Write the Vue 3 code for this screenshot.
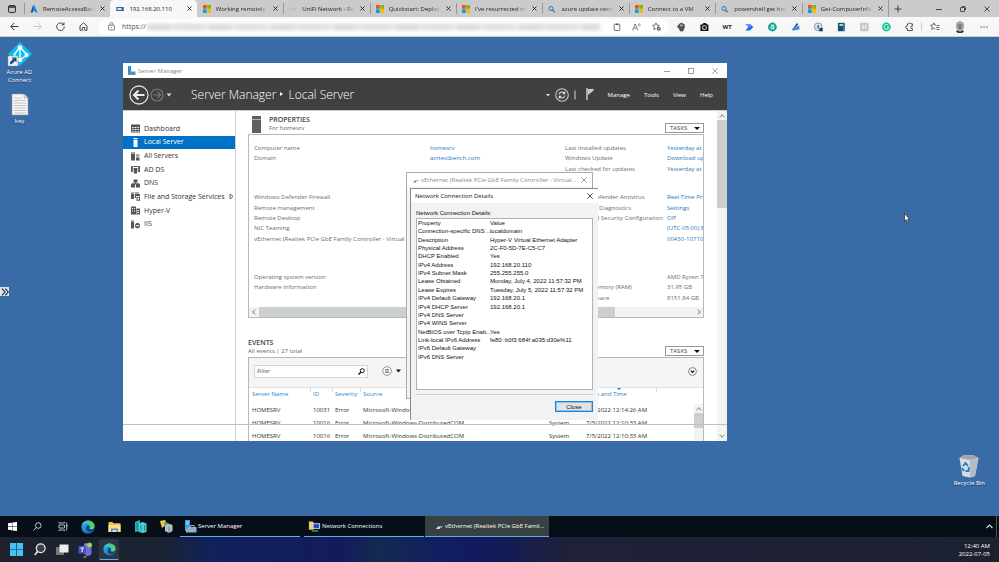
<script setup>
const tabs = [
  { icon: 'azure', title: 'RemoteAccessBastion' },
  { icon: 'bastion', title: '192.168.20.110', active: true },
  { icon: 'ms', title: 'Working remotely with' },
  { icon: 'dash', title: 'UniFi Network - Room' },
  { icon: 'ms', title: 'Quickstart: Deploy A' },
  { icon: 'ms', title: "I've resurrected my old" },
  { icon: 'search', title: 'azure update center' },
  { icon: 'ms', title: 'Connect to a VM - Az' },
  { icon: 'search', title: 'powershell get hostn' },
  { icon: 'ms', title: 'Get-ComputerInfo (M' }
]

const nav = [
  { icon: 'dashboard', label: 'Dashboard' },
  { icon: 'server', label: 'Local Server', active: true },
  { icon: 'servers', label: 'All Servers' },
  { icon: 'adds', label: 'AD DS' },
  { icon: 'dns', label: 'DNS' },
  { icon: 'files', label: 'File and Storage Services', more: true },
  { icon: 'hyperv', label: 'Hyper-V' },
  { icon: 'iis', label: 'IIS' }
]

const groups = [
  [
    ['Computer name', 'homesrv', 'Last installed updates', 'Yesterday at 1:12'],
    ['Domain', 'azrtestbench.com', 'Windows Update', 'Download updates'],
    ['', '', 'Last checked for updates', 'Yesterday at 1:12']
  ],
  [
    ['Windows Defender Firewall', '', 'Windows Defender Antivirus', 'Real-Time Protection'],
    ['Remote management', '', 'Feedback & Diagnostics', 'Settings'],
    ['Remote Desktop', '', 'IE Enhanced Security Configuration', 'Off'],
    ['NIC Teaming', '', '', '(UTC-05:00) Eastern'],
    ['vEthernet (Realtek PCIe GbE Family Controller - Virtual Switch)', '', '', '00430-10710-']
  ],
  [
    ['Operating system version', '', '', 'AMD Ryzen 7'],
    ['Hardware information', '', 'Installed memory (RAM)', '31.95 GB'],
    ['', '', 'Total disk space', '8151.84 GB']
  ]
]

const events = [
  ['HOMESRV', '10031', 'Error', 'Microsoft-Windows-DistributedCOM', 'System', '7/5/2022 12:14:26 AM'],
  ['HOMESRV', '10016', 'Error', 'Microsoft-Windows-DistributedCOM', 'System', '7/5/2022 12:10:33 AM'],
  ['HOMESRV', '10016', 'Error', 'Microsoft-Windows-DistributedCOM', 'System', '7/5/2022 12:10:33 AM']
]

const details = [
  ['Connection-specific DNS ...', 'localdomain'],
  ['Description', 'Hyper-V Virtual Ethernet Adapter'],
  ['Physical Address', '2C-F0-5D-7E-C5-C7'],
  ['DHCP Enabled', 'Yes'],
  ['IPv4 Address', '192.168.20.110'],
  ['IPv4 Subnet Mask', '255.255.255.0'],
  ['Lease Obtained', 'Monday, July 4, 2022 11:57:32 PM'],
  ['Lease Expires', 'Tuesday, July 5, 2022 11:57:32 PM'],
  ['IPv4 Default Gateway', '192.168.20.1'],
  ['IPv4 DHCP Server', '192.168.20.1'],
  ['IPv4 DNS Server', ''],
  ['IPv4 WINS Server', ''],
  ['NetBIOS over Tcpip Enab...', 'Yes'],
  ['Link-local IPv6 Address', 'fe80::b0f3:684f:a035:d30e%11'],
  ['IPv6 Default Gateway', ''],
  ['IPv6 DNS Server', '']
]
</script>

<template>
  <div class="page">
    <svg class="defs" width="0" height="0" aria-hidden="true">
      <defs>
        <linearGradient id="edgeBlue" x1="0" y1="0" x2="1" y2="1">
          <stop offset="0" stop-color="#2bb8e6" /><stop offset="1" stop-color="#0f5fb0" />
        </linearGradient>
        <linearGradient id="edgeGreen" x1="0" y1="0" x2="1" y2="0">
          <stop offset="0" stop-color="#2fb6e8" /><stop offset="1" stop-color="#5fd45a" />
        </linearGradient>
        <symbol id="edge" viewBox="0 0 16 16">
          <circle cx="8" cy="8" r="7.5" fill="url(#edgeBlue)" />
          <path d="M.6 7C1.200 3 4.400.5 8 .5c4.500 0 7.500 3 7.500 6.300 0 2.400-1.800 3.900-4 3.900-1.400 0-2.200-.5-2-1.100.5-.9.600-1.600.4-2.400C9.400 5.400 7.800 4.500 6 4.500 3.600 4.500 1.500 5.500.6 7z" fill="url(#edgeGreen)" />
          <path d="M9.700 6.900c.3 1-.1 1.800-.4 2.500-.3.800.9 1.500 2.700 1.400 1.300-.1 2.300-.6 2.900-1.200-.5 1.500-1.800 3.200-3.800 3.700-3 .6-5.200-1.600-5.200-3.900 0-1.500.8-2.700 1.900-3.200.8-.3 1.600 0 1.900.7z" fill="#0c3f7c" />
        </symbol>
        <symbol id="win" viewBox="0 0 12 12">
          <path d="M0 1.700L5.500.9v4.800H0zM6 .8L12 0v5.700H6zM0 6.300h5.500v4.800L0 10.300zM6 6.300h6V12l-6-.8z" fill="#fff" />
        </symbol>
      </defs>
    </svg>

    <div class="tabstrip">
      <button class="tabmenu" aria-label="Tab actions">
        <svg width="8" height="8" viewBox="0 0 8 8"><rect x=".6" y=".6" width="6.800" height="6.800" rx="1" fill="none" stroke="#222" /><path d="M.6 1.300h6.800v1.400H.6z" fill="#222" /></svg>
      </button>
      <div class="tabs" role="tablist">
        <div v-for="t in tabs" :key="t.title" class="tab" :class="{ active: t.active }" role="tab">
          <svg v-if="t.icon === 'azure'" class="fav" viewBox="0 0 16 16"><path d="M6 1h4L5.500 15H1z" fill="#0c59a4" /><path d="M9.500 1H6.500l4 14H15z" fill="#2e9fe6" /><path d="M5 9h7l1.500 5-6-3z" fill="#0078d4" /></svg>
          <svg v-else-if="t.icon === 'bastion'" class="fav" viewBox="0 0 16 16"><rect x=".5" y="4" width="15" height="8" fill="#2c62a6" /><rect x="3" y="6" width="8" height="4" fill="#dceafa" /></svg>
          <svg v-else-if="t.icon === 'ms'" class="fav" viewBox="0 0 16 16"><path d="M0 0h7.500v7.500H0z" fill="#f25022" /><path d="M8.500 0H16v7.500H8.500z" fill="#7fba00" /><path d="M0 8.500h7.500V16H0z" fill="#00a4ef" /><path d="M8.500 8.500H16V16H8.500z" fill="#ffb900" /></svg>
          <svg v-else-if="t.icon === 'search'" class="fav" viewBox="0 0 16 16"><circle cx="6" cy="7" r="4" fill="none" stroke="#2079c8" stroke-width="2" /><path d="M9 10l4.500 4.500" stroke="#2079c8" stroke-width="2.200" /></svg>
          <svg v-else class="fav" viewBox="0 0 16 16"><path d="M2 8h4M9 8h4" stroke="#a0a0a0" stroke-width="1.500" /></svg>
          <span class="tabtitle">{{ t.title }}</span>
          <button class="tabclose" aria-label="Close tab"><svg width="5" height="5" viewBox="0 0 5 5"><path d="M.5.5l4 4m0-4l-4 4" stroke="#222" stroke-width=".9" /></svg></button>
        </div>
      </div>
      <div class="winctl">
        <button aria-label="New tab"><svg width="8" height="8" viewBox="0 0 8 8"><path d="M4 .5v7M.5 4h7" stroke="#333" stroke-width=".9" /></svg></button>
        <span class="spacer"></span>
        <button aria-label="Minimize"><svg width="6" height="6" viewBox="0 0 6 6"><path d="M0 3.500h6" stroke="#222" stroke-width=".8" /></svg></button>
        <button aria-label="Restore"><svg width="6" height="6" viewBox="0 0 6 6"><rect x=".5" y="1.500" width="4" height="4" rx=".6" fill="none" stroke="#222" stroke-width=".8" /><path d="M2 .5h2.500a1 1 0 0 1 1 1V4" fill="none" stroke="#222" stroke-width=".8" /></svg></button>
        <button aria-label="Close"><svg width="6" height="6" viewBox="0 0 6 6"><path d="M.5.5l5 5m0-5l-5 5" stroke="#222" stroke-width=".8" /></svg></button>
      </div>
    </div>

    <div class="toolbar">
      <div class="navbtns">
        <button aria-label="Back"><svg width="9" height="9" viewBox="0 0 9 9"><path d="M8.500 4.500H1M4.200 1L.8 4.500 4.200 8" fill="none" stroke="#333" /></svg></button>
        <button aria-label="Forward"><svg width="9" height="9" viewBox="0 0 9 9"><path d="M.5 4.500H8M4.800 1l3.400 3.500L4.800 8" fill="none" stroke="#c8c8c8" /></svg></button>
        <button aria-label="Reload"><svg width="9" height="9" viewBox="0 0 9 9"><path d="M7.600 2.500A3.800 3.800 0 1 0 8.300 4.500M8 .5v2.300H5.700" fill="none" stroke="#333" stroke-width=".9" /></svg></button>
        <button aria-label="Home"><svg width="9" height="9" viewBox="0 0 9 9"><path d="M1 4l3.500-3.200L8 4v4.300H5.700V5.500H3.300v2.800H1z" fill="none" stroke="#333" stroke-width=".9" /></svg></button>
      </div>
      <div class="address">
        <svg width="7" height="9" viewBox="0 0 7 9"><rect x=".5" y="3.200" width="6" height="4.800" rx=".8" fill="none" stroke="#666" stroke-width=".8" /><path d="M2 3V2a1.500 1.500 0 0 1 3 0v1M3.500 5v1.200" fill="none" stroke="#666" stroke-width=".8" /></svg>
        <span class="url">https://</span>
        <span class="redacted"></span>
        <svg width="8" height="8" viewBox="0 0 8 8"><rect x="1.200" y="1.200" width="5.600" height="6.300" rx=".6" fill="none" stroke="#555" stroke-width=".8" /><path d="M2.800.6h2.400v1.500H2.800z" fill="#555" /></svg>
        <svg width="9" height="8" viewBox="0 0 9 8"><path d="M.5 7.500l2.700-6.500 2.700 6.500M1.400 5.200H5" fill="none" stroke="#666" stroke-width=".8" /><path d="M6 1c.6.500.6 1.300 0 2M7.300.3c1 1 1 2.300 0 3.300" fill="none" stroke="#666" stroke-width=".7" /></svg>
        <svg width="9" height="9" viewBox="0 0 9 9"><path d="M4 .8l1 2.300 2.500.3-1.800 1.700.2 1.200M4 6.500L1.900 7.600l.4-2.500L.5 3.400 3 3.100 4 .8" fill="none" stroke="#555" stroke-width=".8" /><circle cx="6.700" cy="6.800" r="2" fill="#555" /><path d="M6.700 5.800v2M5.700 6.800h2" stroke="#fff" stroke-width=".5" /></svg>
      </div>
      <div class="exts">
        <svg viewBox="0 0 10 10"><path d="M1.500 3.500L2.800 4V2l1 .2.3-.9 1.100.3.900-.3.600 1 1.200.2V6L7 7.500 6.500 9H4L3 6.800 1.200 5z" fill="#555" stroke="#222" stroke-width=".6" /><path d="M4 2.500v1.800M5.200 2.300v2M6.500 2.800v1.500" stroke="#f0f0f0" stroke-width=".6" /></svg>
        <svg viewBox="0 0 10 10"><path d="M1 2.500h2L4 1h2.500l1 1.500H9V9H1z" fill="#111" /><circle cx="5" cy="5.600" r="2" fill="none" stroke="#fff" stroke-width=".9" /></svg>
        <b class="wt">WT</b>
        <svg viewBox="0 0 10 10"><path d="M1 2h4.500L9 5 5.500 8.500H1L4 5z" fill="#2769e6" /><path d="M1 2h3.500l3 2.500H4z" fill="#5aa0ff" /></svg>
        <svg viewBox="0 0 10 10"><circle cx="5" cy="5" r="4.400" fill="#12a594" /><circle cx="4.800" cy="5.500" r="1.400" fill="none" stroke="#fff" /><path d="M3.500 3h2.800v4.300" fill="none" stroke="#fff" stroke-width=".8" /></svg>
        <svg viewBox="0 0 10 10"><path d="M1 8.500L6.500 1 8 2.200 4 6.500z" fill="#2b4d8c" /><path d="M2 8.800L4 4.500 9 4v3.500z" fill="#3f8be8" /></svg>
        <svg viewBox="0 0 10 10"><circle cx="4.800" cy="4.800" r="3.900" fill="#d5e6f7" stroke="#6d9ac4" /><path d="M4.800 3v3.500" stroke="#245" stroke-width="1.200" /><rect x="6" y="6" width="3.300" height="3.300" fill="#333" /></svg>
        <svg viewBox="0 0 10 10"><rect x="1.500" y=".8" width="7" height="8.400" fill="#1e4c6b" /><rect x="3" y="2" width="3.500" height="2" fill="#a4d8ef" /><path d="M7.500 1v8" stroke="#4fa6cc" /></svg>
        <svg viewBox="0 0 10 10"><rect x=".8" y=".8" width="8.400" height="8.400" rx=".8" fill="#c4c4c4" /><path d="M3.500 2.500v5M6.500 2.500v5M3.500 5h3" stroke="#f5f5f5" /></svg>
        <svg viewBox="0 0 10 10"><circle cx="5" cy="5" r="4.400" fill="#15c39a" /><path d="M7 3.500A2.400 2.400 0 1 0 7.400 5.400H5.500" fill="none" stroke="#fff" stroke-width=".9" /></svg>
        <svg viewBox="0 0 10 10"><path d="M3 1.800h1.200a1.200 1.200 0 0 1 2.300 0H8v2.400a1.200 1.200 0 1 0 0 2.200V8.500H3V6.500a1.300 1.300 0 1 1 0-2.500z" fill="none" stroke="#444" stroke-width=".9" /></svg>
      </div>
      <div class="tools">
        <svg width="10" height="10" viewBox="0 0 10 10"><path d="M6 3.200L4.800 3 3.800.9 2.800 3 .6 3.300l1.600 1.600-.4 2.400 2-1.100 1.400.8M6.500 3.500h3M6 5.500h3.500M6.500 7.500h3" fill="none" stroke="#444" stroke-width=".8" /></svg>
        <svg width="10" height="12" viewBox="0 0 10 12"><ellipse cx="5" cy="5" rx="4.200" ry="4.800" fill="#a8a8a8" /><path d="M3 4h1.300M5.700 4H7M3.500 7h3M5 4.500v1.500" stroke="#333" stroke-width=".9" /><path d="M1 10.500Q2.500 8.500 4 10l1 .5L6 10q1.500-1.500 3 .5L7 12H3z" fill="#3a3a3a" /></svg>
        <svg width="8" height="4" viewBox="0 0 8 4"><path d="M.5 2h1.300M3.400 2h1.300M6.300 2h1.300" stroke="#333" stroke-width="1.200" /></svg>
      </div>
    </div>

    <main class="desktop">
      <div class="shortcuts">
        <a href="#" class="shortcut">
          <svg width="26" height="26" viewBox="0 0 26 26"><path d="M13 1l12 12-12 12L1 13z" fill="#10bdf2" /><path d="M13 6v13M13 6l-6 8 6 5 7-5z" fill="none" stroke="#fff" stroke-width="1.300" /><circle cx="13" cy="6.500" r="2.300" fill="#fff" /><circle cx="19.500" cy="14" r="2" fill="#fff" /><circle cx="13" cy="19" r="2.200" fill="#fff" /><rect x="1" y="15" width="10" height="10" fill="#f5f5f5" stroke="#889" stroke-width=".5" /><path d="M3 23.500V21l3-3-1.700-1.500H9.500v5L8 20l-2.500 2.500z" fill="#1c4d94" /></svg>
          <span>Azure AD<br>Connect</span>
        </a>
        <a href="#" class="shortcut">
          <svg width="18" height="23" viewBox="0 0 18 23"><path d="M1 1h12l4 4v17H1z" fill="#f6f6f6" stroke="#999" stroke-width=".6" /><path d="M13 1v4h4" fill="#ddd" stroke="#999" stroke-width=".5" /><path d="M3 5h8M3 7.500h12M3 10h12M3 12.500h12M3 15h12M3 17.500h12M3 20h12" stroke="#b5b9bd" stroke-width=".8" /></svg>
          <span>key</span>
        </a>
      </div>
      <button class="flyout" aria-label="Expand clipboard panel"><svg width="8" height="8" viewBox="0 0 8 8"><path d="M1 .7L4 4 1 7.300M4.300.7l3 3.300-3 3.300" fill="none" stroke="#222" stroke-width="1.100" /></svg></button>
      <a href="#" class="shortcut bin">
        <svg width="22" height="24" viewBox="0 0 22 24"><path d="M1.500 4L6 1l10 .5L20.500 4 17 22 12 23.500 4.500 22z" fill="#d7dce0" /><path d="M1.500 4l10 2 9-2-4.500-2.500L6 1z" fill="#9ca6ac" /><path d="M12 6l8.500-2L17 22l-5 1.500z" fill="#b4bcc2" /><path d="M5 12l2.500-3L10 12M11 13l-.5 4H7.500M6 17l-2-3" fill="none" stroke="#1b7fd3" stroke-width="1.900" /></svg>
        <span>Recycle Bin</span>
      </a>
      <svg class="cursor" width="6" height="10" viewBox="0 0 6 10"><path d="M.5.6v7.600l1.700-1.500 1.100 2.700 1.200-.5-1.100-2.600h2.200z" fill="#fff" stroke="#111" stroke-width=".6" /></svg>

      <section class="window manager">
        <header class="caption">
          <svg width="9" height="9" viewBox="0 0 9 9"><path d="M1 0h3v7H1z" fill="#2e8bd0" /><path d="M3 5.500h5.500V9H1V7z" fill="#5f8fb5" /><path d="M2 1.200h1" stroke="#fff" stroke-width=".6" /></svg>
          <span>Server Manager</span>
          <button aria-label="Minimize"><svg width="6" height="6" viewBox="0 0 6 6"><path d="M0 3.500h6" stroke="#888" stroke-width=".8" /></svg></button>
          <button aria-label="Maximize"><svg width="6" height="6" viewBox="0 0 6 6"><rect x=".5" y=".5" width="5" height="5" fill="none" stroke="#888" stroke-width=".8" /></svg></button>
          <button aria-label="Close"><svg width="6" height="6" viewBox="0 0 6 6"><path d="M.3.3l5.400 5.400m0-5.400L.3 5.700" stroke="#888" stroke-width=".8" /></svg></button>
        </header>
        <div class="banner">
          <svg width="46" height="20" viewBox="0 0 46 20"><circle cx="11" cy="10" r="9" fill="none" stroke="#ddd" stroke-width="1.300" /><path d="M16.500 10H6.500M10.500 5.500L6 10l4.500 4.500" fill="none" stroke="#eee" stroke-width="2" /><circle cx="29" cy="10" r="6" fill="none" stroke="#777" stroke-width="1.200" /><path d="M25.500 10h6.500M29.500 7l3 3-3 3" fill="none" stroke="#777" stroke-width="1.200" /><path d="M38.500 8.500h5l-2.500 3z" fill="#ddd" /></svg>
          <h1>Server Manager <i></i> Local Server</h1>
          <svg width="48" height="18" viewBox="0 0 48 18"><path d="M0 8h4L2 10.500z" fill="#ddd" /><circle cx="16" cy="9" r="6.300" fill="none" stroke="#c8c8c8" stroke-width="1.100" /><path d="M13 8.500a3 3 0 0 1 5.300-1.300M18.800 5.500v2.300h-2.300M19 9.500a3 3 0 0 1-5.300 1.300M13.200 12.500v-2.300h2.300" fill="none" stroke="#ddd" stroke-width="1.100" /><path d="M29 4.500v9" stroke="#ccc" stroke-width="1.100" /><path d="M41 2v12" stroke="#ccc" stroke-width="1.500" /><path d="M42 3h6l-1 2-5 4z" fill="#ccc" /></svg>
          <nav class="menus"><button>Manage</button><button>Tools</button><button>View</button><button>Help</button></nav>
        </div>
        <div class="content">
          <nav class="side">
            <a v-for="n in nav" :key="n.label" href="#" :class="{ on: n.active }">
              <svg width="9" height="9" viewBox="0 0 9 9" fill="currentColor">
                <path v-if="n.icon === 'dashboard'" d="M0 .5h9v8H0zM1 3v1h1.500V3zm2.500 0v1h2V3zm3 0v1H8V3zM1 5v1h1.500V5zm2.500 0v1h2V5zm3 0v1H8V5zM1 7v.8h1.500V7zm2.500 0v.8h2V7zm3 0v.8H8V7z" fill-rule="evenodd" />
                <path v-else-if="n.icon === 'server'" d="M2.500 0h4v1.300h-4zM2.500 2h4v7h-4z" />
                <path v-else-if="n.icon === 'servers'" d="M0 .5h4v1H0zM0 2h4v6.500H0zM5 2.500h3.500v1H5zM5 4.500h3.500v1H5zM5 6h3.500v2.500H5z" />
                <path v-else-if="n.icon === 'adds'" d="M0 1h1.800v6H0zM2.500 1h4v1h-4zM2.500 3h4L6 8.500H3zM7.200 1H9v6H7.200z" />
                <path v-else-if="n.icon === 'dns'" d="M2.500.5h4v3h-4zM0 4.800h4v3.700H0zM5 4.800h4v3.700H5zM4 3.500h1v2H4zM1 4h7v.5H1z" />
                <path v-else-if="n.icon === 'files'" d="M0 .5h3v1H0zM0 2h3v5H0zM3.800.5H8v1H3.800zM3.800 2H9v2H5v2H3.800zM5.500 4.700H9v4H5.500zM6.500 5.700v2H8v-2z" fill-rule="evenodd" />
                <path v-else-if="n.icon === 'hyperv'" d="M0 .5h5v8H0zM1 2v1h1V2zm2 0v1h1V2zM1 4.500v1h1v-1zm2 0v1h1v-1zM5.500 2.500H9v6H5.500zM6.300 4v1h1.700V4zm0 2v1h1.700V6z" fill-rule="evenodd" />
                <path v-else d="M0 .5h3v1H0zM0 2h3v6.500H0zM6.500 3a2.700 2.700 0 1 1-.1 0zM4.700 5.200v1h3.500v-1z" fill-rule="evenodd" />
              </svg>
              <span>{{ n.label }}</span>
              <svg v-if="n.more" class="more" width="5" height="7" viewBox="0 0 5 7"><path d="M1 1l3 2.500L1 6z" fill="none" stroke="#444" stroke-width=".8" /></svg>
            </a>
          </nav>

          <div class="main">
            <div class="head">
              <svg width="9" height="17" viewBox="0 0 9 17"><path d="M0 0h9v17H0z" fill="#606060" /><path d="M0 3.500h9" stroke="#ccc" stroke-width=".8" /></svg>
              <div class="headtext"><h2>PROPERTIES</h2><p>For homesrv</p></div>
              <button class="tasks">TASKS<i></i></button>
            </div>
            <div class="panel">
              <div v-for="(g, gi) in groups" :key="gi" class="group">
                <div v-for="(r, ri) in g" :key="ri" class="prow">
                  <span>{{ r[0] }}</span><a href="#">{{ r[1] }}</a><span>{{ r[2] }}</span>
                  <a v-if="gi < 2" href="#">{{ r[3] }}</a><span v-else>{{ r[3] }}</span>
                </div>
              </div>
              <div class="hscroll"><i class="chev left"></i><b></b><i class="chev right"></i></div>
            </div>
            <div class="head second">
              <div class="headtext"><h2>EVENTS</h2><p>All events | 27 total</p></div>
              <button class="tasks">TASKS<i></i></button>
            </div>
            <div class="panel events">
              <div class="filterbar">
                <div class="filter">
                  <input type="text" placeholder="Filter" aria-label="Filter">
                  <svg width="7" height="7" viewBox="0 0 7 7"><circle cx="4.300" cy="2.700" r="2" fill="none" stroke="#111" /><path d="M2.800 4.200L.5 6.500" stroke="#111" stroke-width="1.300" /></svg>
                </div>
                <svg width="20" height="10" viewBox="0 0 20 10"><circle cx="5" cy="5" r="4.300" fill="#fff" stroke="#777" stroke-width=".8" /><path d="M3 3.500h4M3 5h4M3 6.500h4" stroke="#666" stroke-width=".8" /><path d="M14 3.500h5L16.500 6.500z" fill="#111" /></svg>
                <span class="spacer"></span>
                <svg width="9" height="9" viewBox="0 0 9 9"><circle cx="4.500" cy="4.500" r="3.900" fill="#fff" stroke="#666" stroke-width=".8" /><path d="M2.800 3.700l1.700 1.700 1.700-1.700" fill="none" stroke="#111" stroke-width="1.200" /></svg>
              </div>
              <table class="log">
                <colgroup><col class="c1"><col class="c2"><col class="c3"><col class="c4"><col class="c5"><col class="c6"><col></colgroup>
                <thead><tr><th>Server Name</th><th>ID</th><th>Severity</th><th>Source</th><th>Log</th><th class="sorted">Date and Time</th><th></th></tr></thead>
                <tbody><tr v-for="(e, i) in events" :key="i"><td v-for="(c, j) in e" :key="j">{{ c }}</td><td></td></tr></tbody>
              </table>
              <div class="vscroll inner"><i class="chev up"></i><b></b></div>
            </div>
          </div>
          <div class="vscroll outer"><i class="chev up"></i><b></b><i class="chev down"></i></div>
        </div>
        <div class="seam"></div>
      </section>

      <section class="window status">
        <header class="dcaption">
          <svg width="6" height="5" viewBox="0 0 6 5"><path d="M0 4.500l1.500-2H4l-1.500 2z" fill="#6b8ba8" /><path d="M3 2h3L4.500 3.500z" fill="#8fb4cf" /></svg>
          <span>vEthernet (Realtek PCIe GbE Family Controller - Virtual...</span>
          <button aria-label="Close"><svg width="6" height="6" viewBox="0 0 6 6"><path d="M.3.3l5.400 5.400m0-5.400L.3 5.700" stroke="#888" stroke-width=".8" /></svg></button>
        </header>
      </section>

      <section class="window details">
        <header class="dcaption">
          <span>Network Connection Details</span>
          <button aria-label="Close"><svg width="6" height="6" viewBox="0 0 6 6"><path d="M.3.3l5.400 5.400m0-5.400L.3 5.700" stroke="#222" stroke-width=".8" /></svg></button>
        </header>
        <div class="dbody">
          <p id="dlabel">Network Connection Details:</p>
          <div class="listbox">
            <table aria-labelledby="dlabel">
              <thead><tr><th>Property</th><th>Value</th></tr></thead>
              <tbody><tr v-for="d in details" :key="d[0]"><td>{{ d[0] }}</td><td>{{ d[1] }}</td></tr></tbody>
            </table>
          </div>
          <hr>
          <button class="closebtn">Close</button>
        </div>
      </section>
    </main>

    <footer class="remotebar">
      <div class="pins">
        <button aria-label="Start"><svg width="9" height="9"><use href="#win" /></svg></button>
        <button aria-label="Search"><svg width="9" height="9" viewBox="0 0 9 9"><circle cx="5.300" cy="3.500" r="2.800" fill="none" stroke="#ddd" stroke-width=".9" /><path d="M3.300 5.500L.5 8.500" stroke="#ddd" stroke-width=".9" /></svg></button>
        <button aria-label="Task view"><svg width="10" height="9" viewBox="0 0 10 9"><path d="M1 0v1h5.500V0M1 3h5.500v3H1zM1 9V8h5.500v1M8.700.5v8" fill="none" stroke="#ccc" stroke-width=".9" /><path d="M8 3h1.500v1.500H8z" fill="#ccc" /></svg></button>
        <button aria-label="Edge"><svg width="14" height="14"><use href="#edge" /></svg></button>
        <button aria-label="File Explorer"><svg width="13" height="12" viewBox="0 0 13 12"><path d="M.5 1h4l1 1.300h7V11H.5z" fill="#f2c14e" /><path d="M.5 4h12v7H.5z" fill="#ffe08a" /><path d="M3 7.500h7V11H8.500V9h-4v2H3z" fill="#3f94dc" /></svg></button>
        <button aria-label="Server tools"><svg width="13" height="13" viewBox="0 0 13 13"><path d="M1 2l5-2v11l-5 1z" fill="#2ab1bd" /><path d="M5 3.500l3.500-1.500 4 1.500V12L9 13l-4-1z" fill="#49d0d8" /><path d="M3 3v7M7 5v6M10.500 5v6" stroke="#14747e" stroke-width=".8" /></svg></button>
        <button aria-label="Directory"><svg width="13" height="13" viewBox="0 0 13 13"><path d="M0 1l5-1 2 4-5 4z" fill="#f0c75a" /><path d="M4 2l4 1v5H5z" fill="#4e9b57" /><path d="M5 5.500l3-2 4.500 1.500V11L9 13l-4-2z" fill="#b9bec2" /><path d="M9 6.500v6" stroke="#777" stroke-width=".8" /></svg></button>
      </div>
      <div class="running">
        <button class="task"><svg width="13" height="13" viewBox="0 0 13 13"><path d="M1 0h5v11H1z" fill="#3b9fe3" /><path d="M2 2h3M2 4h3" stroke="#dff" stroke-width=".7" /><path d="M4 7h8.500v5.500H2V10z" fill="#8fb0c8" /><path d="M6.500 7V5.500H10V7" fill="none" stroke="#8fb0c8" /></svg><span>Server Manager</span></button>
        <button class="task net"><svg width="13" height="13" viewBox="0 0 14 13"><path d="M1 1h4l1 1v8H1z" fill="#f0d068" /><path d="M5 3h8v6H5z" fill="#d3dde8" /><path d="M6 4h6v4H6z" fill="#1e3fd0" /><path d="M4 10.500h7v1.500H4z" fill="#39a568" /></svg><span>Network Connections</span></button>
        <button class="task current"><svg width="7" height="6" viewBox="0 0 7 6"><path d="M0 6l2-2.500h3L3.500 6z" fill="#d8e2e8" /><path d="M3.500 3h3L5.500 5z" fill="#8ab3c9" /></svg><span>vEthernet (Realtek PCIe GbE Famil...</span></button>
      </div>
      <span class="spacer"></span>
      <button class="tray" aria-label="Show hidden icons"><svg width="7" height="5" viewBox="0 0 7 5"><path d="M.5 4l3-3 3 3" fill="none" stroke="#ddd" stroke-width="1.100" /></svg></button>
    </footer>

    <footer class="hostbar">
      <div class="pins">
        <button aria-label="Start"><svg width="13" height="13" viewBox="0 0 13 13"><path d="M0 0h6.200v6.200H0zM6.800 0H13v6.200H6.800zM0 6.800h6.200V13H0zM6.800 6.800H13V13H6.800z" fill="#45c1f5" /></svg></button>
        <button aria-label="Search"><svg width="12" height="13" viewBox="0 0 12 13"><circle cx="6.700" cy="5.300" r="4.400" fill="#3b414b" stroke="#eee" stroke-width="1.200" /><path d="M3.500 8.500L.8 12" stroke="#eee" stroke-width="1.500" /></svg></button>
        <button aria-label="Task view"><svg width="13" height="12" viewBox="0 0 13 12"><path d="M0 3h8v8H0z" fill="#777" /><path d="M3.500.5h9v8h-9z" fill="#ececec" /></svg></button>
        <button aria-label="Teams"><svg width="15" height="16" viewBox="0 0 15 16"><circle cx="8" cy="3" r="2" fill="#7b83eb" /><path d="M5 5h8.500v4.500a3.500 3.500 0 0 1-7 1.500z" fill="#6a70d8" /><rect x=".5" y="4" width="7.500" height="7.500" rx=".8" fill="#4b53bc" /><path d="M2.500 6h3.500M4.200 6v4" stroke="#fff" /><circle cx="11.500" cy="3" r="2.600" fill="#92c353" /><path d="M10.200 3l1 1 1.600-1.800" fill="none" stroke="#fff" stroke-width=".6" /><path d="M5.500 15h3" stroke="#aaa" stroke-width="1.200" /></svg></button>
        <button class="hot" aria-label="Edge"><svg width="13" height="13"><use href="#edge" /></svg></button>
      </div>
      <div class="clock"><span>12:40 AM</span><span>2022-07-05</span></div>
    </footer>
  </div>
</template>

<style>
body { margin: 0; background: #396ca6; }
</style>

<style scoped>
* { box-sizing: border-box; }
.page { display: flex; flex-direction: column; height: 100vh; overflow: hidden; font: 6px/8px "Open Sans", "Noto Sans", sans-serif; color: #222; }
.defs { position: absolute; }
svg { flex: none; display: block; }
button { display: flex; align-items: center; justify-content: center; padding: 0; border: 0; background: none; font: inherit; color: inherit; }
a { color: inherit; text-decoration: none; }
h1, h2, p { margin: 0; font: inherit; }
.spacer { flex: 1; }

.tabstrip { display: flex; flex: none; height: 17px; background: #cbcbcb; }
.tabmenu { width: 24px; }
.tabs { display: flex; flex: 1; min-width: 0; }
.tab { display: flex; flex: 1; min-width: 0; align-items: center; gap: 5px; padding: 0 5px 0 6px; position: relative; }
.tab::before { content: ""; position: absolute; left: 0; top: 3px; bottom: 3px; width: 1px; background: #999; }
.tab.active { background: #f7f7f7; border-radius: 4px 4px 0 0; }
.tab.active::before, .tab.active + .tab::before { display: none; }
.fav { width: 8px; height: 8px; }
.tabtitle { flex: 1; min-width: 0; overflow: hidden; white-space: nowrap; mask-image: linear-gradient(90deg, #000 80%, transparent); }
.tab.active .tabtitle { mask-image: none; }
.winctl { display: flex; align-items: center; width: 111px; padding-right: 9px; border-left: 1px solid #999; }
.winctl button { width: 18px; }
.winctl button:nth-last-child(-n + 3) { width: 6px; margin-left: 18px; }
.winctl button:nth-last-child(3) { margin-left: 0; }

.toolbar { display: flex; flex: none; align-items: center; height: 20px; background: #f7f7f7; border-bottom: 1px solid #c9ccd0; }
.navbtns { display: flex; width: 98px; padding-left: 3px; }
.navbtns button { width: 23px; }
.address { display: flex; flex: 1; align-items: center; height: 16px; padding: 0 7px 0 10px; gap: 11px; background: #fff; border-radius: 8px; }
.address .url { margin-left: -4px; color: #555; font-size: 7px; }
.redacted { flex: 1; height: 6px; margin: 0 2px 0 -10px; opacity: .8; filter: blur(2px); background: repeating-linear-gradient(90deg, #ccc 0 23px, #dedede 23px 27px, #d2d2d2 27px 58px, #e2e2e2 58px 62px); }
.exts { display: flex; align-items: center; width: 254px; padding-left: 2px; border-right: 1px solid #ccc; height: 9px; }
.exts > * { flex: 1; height: 10px; }
.exts .wt { text-align: center; line-height: 10px; }
.tools { display: flex; align-items: center; justify-content: space-between; width: 77px; padding: 0 11px 0 8px; }

.desktop { position: relative; flex: 1; min-height: 0; background: #396ca6; }
.shortcuts { display: flex; flex-direction: column; gap: 9px; width: 39px; padding-top: 4px; }
.shortcut { display: flex; flex-direction: column; align-items: center; color: #fff; text-align: center; text-shadow: 0 1px 1px #1b3a60; white-space: nowrap; }
.shortcut svg { margin-bottom: 1px; }
.flyout { position: absolute; left: 0; top: 250px; width: 9px; height: 9px; background: #dbe4ee; }
.bin { position: absolute; right: 14px; top: 417px; }
.cursor { position: absolute; left: 904px; top: 176px; }
.window { position: absolute; overflow: hidden; }

.manager { display: flex; flex-direction: column; left: 123px; top: 26px; width: 604px; height: 378px; background: #fff; }
.caption { display: flex; flex: none; align-items: center; height: 15px; padding: 0 9px 0 4px; color: #888; }
.caption span { flex: 1; margin-left: 2px; }
.caption button { margin-left: 18px; }
.banner { display: flex; flex: none; align-items: center; height: 32px; padding: 1px 14px 0 5px; background: #404040; color: #fff; }
.banner h1 { flex: 1; margin-left: 17px; font-size: 12px; line-height: 16px; font-weight: 300; white-space: nowrap; }
.banner h1 i { display: inline-block; margin: 0 2px 0 1px; border: 2px solid transparent; border-left: 3px solid #fff; border-right: 0; vertical-align: 3px; }
.menus { display: flex; gap: 14px; margin-left: 14px; }
.content { display: flex; flex: 1; min-height: 0; border-top: 1px solid #ccc; }
.side { display: grid; grid-auto-rows: 1fr; width: 112px; height: 109px; margin-top: 11px; font-size: 7px; color: #333; }
.side a { display: flex; align-items: center; padding-left: 8px; white-space: nowrap; }
.side a svg { color: #555; }
.side a span { margin-left: 4px; }
.side a.on { background: #0072c6; color: #fff; }
.side a.on svg { color: #fff; }
.side .more { margin-left: 4px; }
.main { flex: 1; min-width: 0; padding: 4px 13px 0 12px; border-left: 1px solid #ccc; }
.head { display: flex; align-items: flex-end; height: 19px; padding-left: 4px; }
.head > svg { align-self: flex-start; margin-top: 1px; }
.headtext { flex: 1; align-self: flex-start; padding-left: 8px; color: #666; }
.head h2 { font-size: 7px; line-height: 9px; font-weight: 600; color: #444; }
.second { padding-left: 0; margin-top: 20px; }
.second .headtext { padding-left: 0; }
.tasks { width: 39px; height: 10px; margin-bottom: 1px; border: 1px solid #999; background: #fff; justify-content: space-between; padding: 0 3px 0 4px; color: #444; }
.tasks i { border: 3px solid transparent; border-top: 3px solid #111; border-bottom: 0; }
.panel { position: relative; border: 1px solid #b8b8b8; }
.group { display: grid; grid-auto-rows: 1fr; height: 31px; margin: 8px 0 0 5px; overflow: hidden; }
.group:nth-child(2) { height: 52px; margin-top: 18px; }
.group:nth-child(3) { margin-top: 28px; }
.prow { display: grid; grid-template-columns: 176px 135px 102px 1fr; align-items: center; color: #6c6c6c; }
.prow > * { overflow: hidden; white-space: nowrap; min-width: 0; }
.prow a { color: #1f78c0; }
.hscroll { display: flex; align-items: center; height: 10px; margin-top: 4px; background: #f3f3f3; padding: 0 3px 0 4px; justify-content: space-between; }
.hscroll b { flex: 1; height: 10px; margin: 0 81px 0 2px; background: #cbcfcd; }
.chev { width: 4px; height: 4px; border: solid #999; border-width: 1px 0 0 1px; }
.chev.left { transform: rotate(-45deg); }
.chev.right { transform: rotate(135deg); }
.chev.up { transform: rotate(45deg); }
.chev.down { transform: rotate(225deg); }
.events { height: 120px; }
.filterbar { display: flex; align-items: center; height: 30px; padding: 0 6px 3px 5px; background: #f5f5f5; border-bottom: 1px solid #e2e2e2; }
.filter { display: flex; align-items: center; width: 114px; height: 13px; margin-right: 14px; padding-right: 2px; background: #fff; border: 1px solid #d5d5d5; }
.filter input { flex: 1; min-width: 0; padding: 0 2px; border: 0; background: none; font: italic 6px/8px "Open Sans", sans-serif; }
.filter input::placeholder { color: #555; opacity: 1; }
.log { width: 100%; border-collapse: collapse; table-layout: fixed; white-space: nowrap; color: #333; }
.log th { height: 12px; padding: 0 0 0 3px; text-align: left; font-weight: 400; color: #2a86cc; position: relative; }
.log th + th::before { content: ""; position: absolute; left: 0; top: 0; width: 1px; height: 4px; background: #ddd; }
.log th.sorted::after { content: ""; position: absolute; left: 34px; top: 0; border: 2px solid transparent; border-top-color: #1f7ac0; border-bottom: 0; }
.log td { height: 13px; padding: 0 0 0 3px; overflow: hidden; }
.log thead::after { content: ""; display: block; height: 3px; }
.c1 { width: 61px; } .c2 { width: 22px; } .c3 { width: 28px; } .c4 { width: 186px; } .c5 { width: 37px; } .c6 { width: 73px; }
.vscroll { display: flex; flex-direction: column; align-items: center; background: #f3f3f3; }
.vscroll b { width: 100%; background: #cbcfcd; }
.vscroll.outer { width: 10px; padding: 4px 0; justify-content: space-between; }
.outer b { height: 88px; margin-bottom: auto; margin-top: 1px; }
.vscroll.inner { position: absolute; right: 0; top: 46px; bottom: 0; width: 9px; padding-top: 4px; }
.inner b { height: 15px; margin-top: 1px; }
.seam { position: absolute; left: 0; right: 0; bottom: 16px; height: 1px; background: #c0c0c0; }

.dcaption { display: flex; align-items: center; height: 14px; padding: 0 5px 0 4px; background: #fff; white-space: nowrap; }
.dcaption span { flex: 1; }
.status { left: 406px; top: 135px; width: 187px; height: 227px; border: 1px solid #aaa; background: #f3f3f3; color: #888; }
.status .dcaption { gap: 2px; padding-left: 6px; }
.details { display: flex; flex-direction: column; left: 410px; top: 151px; width: 188px; height: 232px; background: #f2f2f2; border: solid #8a8a8a; border-width: 1px 0 0 1px; color: #111; }
.dbody { display: flex; flex-direction: column; padding: 6px 5px 0; font-family: "Liberation Sans", Arial, sans-serif; color: #111; }
.listbox { height: 172px; margin-top: 1px; padding: 0 0 0 1px; background: #fff; border: 1px solid #a9b4bf; }
.listbox table { width: 100%; height: 142px; border-collapse: collapse; table-layout: fixed; white-space: nowrap; }
.listbox th, .listbox td { padding: 0; text-align: left; font-weight: 400; line-height: 8px; }
.listbox th:first-child { width: 72px; }
.dbody hr { width: 100%; height: 1px; margin: 4px 0 6px; border: 0; background: #ccc; }
.closebtn { align-self: flex-end; width: 38px; height: 11px; background: #e3e3e3; border: 1px solid #1883d7; box-shadow: inset 0 0 0 1px #8cc3ee; }

.remotebar { display: flex; flex: none; height: 21px; background: #060f17; color: #fff; padding-right: 2px; }
.pins { display: flex; align-items: center; }
.remotebar .pins { width: 180px; }
.remotebar .pins button { width: 26px; }
.remotebar .pins button:nth-child(-n + 3) { width: 25px; }
.running { display: flex; gap: 4px; }
.task { width: 120px; justify-content: flex-start; gap: 1px; padding: 0 4px; border-bottom: 1px solid #62aee8; white-space: nowrap; }
.task.current { width: 124px; margin-left: -3px; padding-left: 11px; gap: 2px; background: #384141; }
.tray { width: 14px; border-right: 1px solid #555; }
.hostbar { display: flex; flex: none; justify-content: space-between; height: 25px; padding: 0 9px 0 5px; color: #fff; background: linear-gradient(90deg, #1d222d 0, #1b2333 16%, #11215a 21%, #131b5c 34%, #142a50 38%, #101d62 45%, #131b58 50%, #1f2138 57%, #1c2130 100%); }
.hostbar .pins button { width: 23px; height: 22px; }
.hostbar .pins .hot { width: 20px; height: 21px; margin-left: 2px; background: #2d3542; border-radius: 2px; border-bottom: 1px solid #52b9ee; }
.clock { display: flex; flex-direction: column; align-items: flex-end; justify-content: center; }
</style>
